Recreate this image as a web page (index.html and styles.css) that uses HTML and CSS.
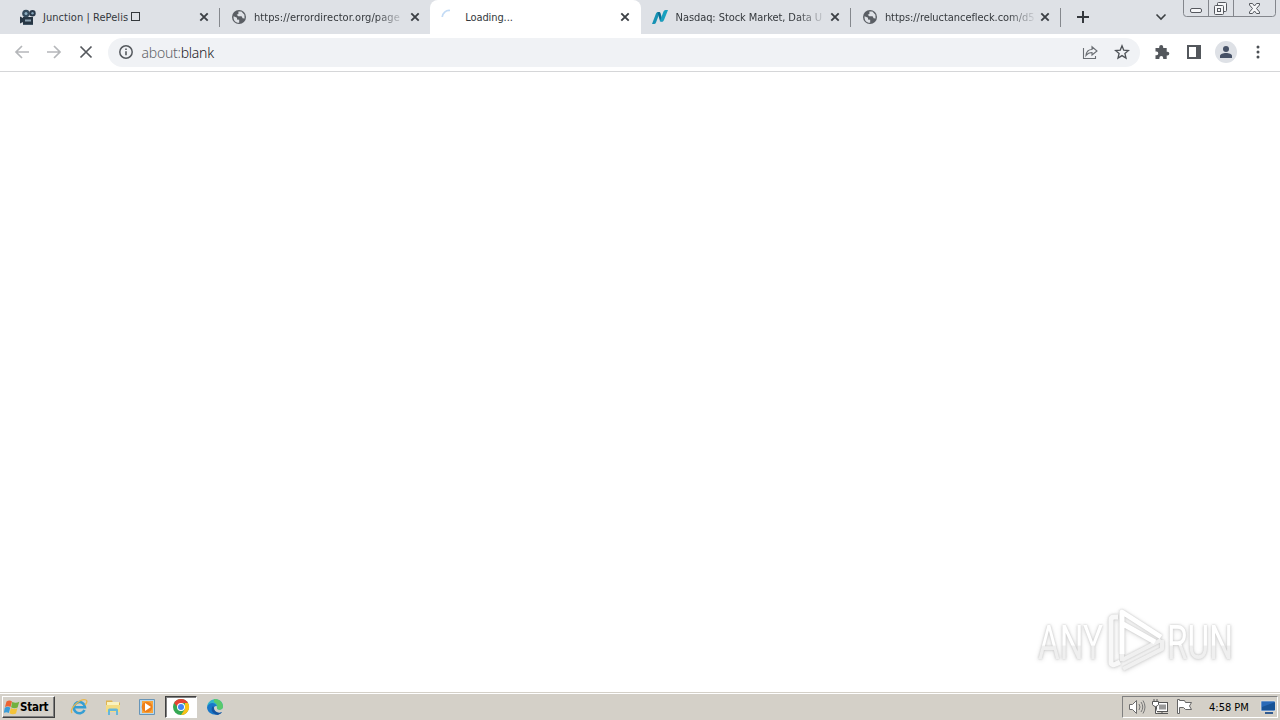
FILE: index.html
```html
<!DOCTYPE html>
<html lang="en">
<head>
<meta charset="utf-8">
<title>about:blank</title>
<link rel="stylesheet" href="styles.css">
</head>
<body>
<svg class="defs" width="0" height="0">
  <symbol id="close" viewBox="0 0 10 10"><path d="M1.3 1.3 8.7 8.7M8.7 1.3 1.3 8.7" stroke="#3c4045" stroke-width="1.9" fill="none"/></symbol>
  <symbol id="globe" viewBox="0 0 16 16"><circle cx="8" cy="8" r="7" fill="#5a5e64"/><path d="M2.6 7.3 6 8.8v1.6l2.2.4v3C4.5 14 2 11.200 2.600 7.300ZM7.400 2.400h3l3 3.300.2 3.800-2-.2-1-2H7.300L5.700 5.700l1.700-.8Z" fill="#dee1e6"/></symbol>
</svg>
<div class="screen">
  <header class="tabs">
    <div class="tab first">
      <svg class="fav" viewBox="0 0 16 16"><path d="M0 7.500 3 9v4l-3 1.500ZM3 8h10v7H3Z" fill="#263543"/><circle cx="6" cy="4.500" r="3.800" fill="#344a5c"/><circle cx="12.500" cy="4.300" r="3.200" fill="#29394a"/><circle cx="6" cy="4.500" r="1.500" fill="#8eafc2"/><circle cx="12.500" cy="4.300" r="1.200" fill="#83a3b8"/><path d="M5 10.500h6v2H5Z" fill="#8ba1b0"/><path d="M3 15h10v1H3Z" fill="#415464"/></svg>
      <span class="title t1">Junction | RePelis <i class="tofu"></i></span>
      <svg class="close"><use href="#close"/></svg>
    </div>
    <div class="tab second">
      <svg class="fav"><use href="#globe"/></svg>
      <span class="title fade t2">https://errordirector.org/page</span>
      <svg class="close"><use href="#close"/></svg>
    </div>
    <div class="tab active">
      <svg class="fav" viewBox="0 0 16 16"><path d="M1.200 8A7 7 0 0 1 9 1.500" fill="none" stroke="#c3dbf5" stroke-width="1.700"/></svg>
      <span class="title t3">Loading...</span>
      <svg class="close"><use href="#close"/></svg>
    </div>
    <div class="tab after">
      <svg class="fav" viewBox="0 0 16 16"><path d="M0 15 4 4.500q.5-1.500 2-1.500h2L4 13.500Q3.500 15 2 15Z" fill="#1692b4"/><path d="M5.500 3H7q1 0 1.500 1l2.300 8.500H9.300q-1 0-1.500-1Z" fill="#0c6e93"/><path d="M7.800 12.500 11.500 2.500Q12 1 13.500 1H16l-4 10q-.5 1.500-2 1.500Z" fill="#18a0bf"/></svg>
      <span class="title fade t4">Nasdaq: Stock Market, Data U</span>
      <svg class="close"><use href="#close"/></svg>
    </div>
    <div class="tab last">
      <svg class="fav"><use href="#globe"/></svg>
      <span class="title fade t5">https://reluctancefleck.com/d5</span>
      <svg class="close"><use href="#close"/></svg>
    </div>
    <svg class="plus" viewBox="0 0 14 14"><path d="M7 1v12M1 7h12" stroke="#34383d" stroke-width="2"/></svg>
    <svg class="chevron" viewBox="0 0 12 8"><path d="m1.500 1.500 4.500 4.500 4.500-4.500" fill="none" stroke="#3c4043" stroke-width="1.600"/></svg>
    <svg class="controls" viewBox="0 0 94 17"><path d="M.5 0v13.500q0 3 3 3h86q3 0 3-3V0M25.500 0v16M50.500 0v16" fill="none" stroke="#83868c"/><g fill="#f5f6f8" stroke="#55585e"><rect x="7.500" y="8.500" width="11" height="4" rx="1.500"/><rect x="34.500" y="2.500" width="9" height="9" rx="1"/><rect x="31.500" y="5.500" width="9" height="9" rx="1"/><rect x="34.500" y="8.500" width="3" height="3"/><path d="M66.500 3.500h3l2 2.500 2-2.500h3v1.500l-3 3.500 3 3.500v1.500h-3l-2-2.500-2 2.500h-3V12l3-3.500-3-3.500Z"/></g></svg>
  </header>
  <nav class="toolbar">
    <svg class="nav" viewBox="0 0 16 16"><path d="M15 8H2M8 2 2 8l6 6" fill="none" stroke="#b5b7ba" stroke-width="1.700"/></svg>
    <svg class="nav" viewBox="0 0 16 16"><path d="M1 8h13M8 2l6 6-6 6" fill="none" stroke="#b5b7ba" stroke-width="1.700"/></svg>
    <svg class="nav" viewBox="0 0 16 16"><path d="m2.500 2.500 11 11m0-11-11 11" fill="none" stroke="#55585d" stroke-width="1.700"/></svg>
    <div class="omnibox">
      <svg class="info" viewBox="0 0 16 16"><circle cx="8" cy="8" r="6.200" fill="none" stroke="#55595e" stroke-width="1.500"/><path d="M8 7.200v4M8 4.500v1.600" stroke="#55595e" stroke-width="1.600"/></svg>
      <span class="url">about:<b>blank</b></span>
      <svg class="share" viewBox="0 0 16 16"><path d="M1.500 4v10.500h12V12M4 11.500c.4-4 2.700-6 6-6V2.800L15 7l-5 4V8.500c-2.600 0-4.500 1-6 3Z" fill="none" stroke="#6a6e73" stroke-width="1.100"/></svg>
      <svg class="star" viewBox="0 0 16 16"><path d="m8 1.800 1.700 4.300 4.800.4-3.600 3 1.100 4.600L8 11.600l-4 2.500 1.100-4.600-3.600-3 4.800-.4Z" fill="none" stroke="#4d5156" stroke-width="1.300"/></svg>
    </div>
    <svg class="tool" viewBox="0 0 16 16"><path d="M1.500 4h3.700V3a2 2 0 0 1 4 0v1h3.500v3.700h.7a1.900 1.900 0 0 1 0 3.800h-.7V15H9.200v-1a1.900 1.900 0 0 0-3.800 0v1H1.500v-3.800h1a1.800 1.800 0 0 0 0-3.600h-1Z" fill="#53575c"/></svg>
    <svg class="tool" viewBox="0 0 16 16"><path d="M1 1h14v14H1Zm2 2v10h7V3Z" fill="#53575c" fill-rule="evenodd"/></svg>
    <svg class="avatar" viewBox="0 0 22 22"><circle cx="11" cy="11" r="11" fill="#dee1e6"/><circle cx="11" cy="8" r="3" fill="#475267"/><path d="M5 17v-2c0-4 12-4 12 0v2Z" fill="#475267"/></svg>
    <svg class="more" viewBox="0 0 4 16"><g fill="#4b4f54"><circle cx="2" cy="3" r="1.500"/><circle cx="2" cy="8" r="1.500"/><circle cx="2" cy="13" r="1.500"/></g></svg>
  </nav>
  <main class="page">
    <svg class="watermark" viewBox="0 0 210 76">
      <defs><linearGradient id="wm" x1="0" y1="0" x2="0" y2="1"><stop offset=".54" stop-color="#fff"/><stop offset=".57" stop-color="#efefef"/></linearGradient></defs>
      <g fill="url(#wm)" font-family="Roboto, sans-serif" font-size="49">
        <text x="8" y="55" textLength="65" lengthAdjust="spacingAndGlyphs">ANY</text>
        <text x="137" y="55" textLength="66" lengthAdjust="spacingAndGlyphs">RUN</text>
      </g>
      <g fill="none" stroke-width="5" stroke-linejoin="round">
        <path d="M88 13h-4q-3 0-3 3v42q0 4 5 2l4-2" stroke="#f8f8f8"/>
        <path d="M92 57V25M92 56l39-20M93 65l39-20V36" stroke="#f0f0f0" stroke-width="4"/>
        <path d="M92 50V8l39 25M93 20l32 18" stroke="#fff"/>
      </g>
    </svg>
  </main>
  <footer class="taskbar">
    <div class="start"><svg viewBox="0 0 16 16"><path d="M2.500 2.500q3-2 5.500 0L6.500 8Q4 6.300 1 8Z" fill="#ec6433"/><path d="M8.300 2.800q3 1.800 7 0L13.600 8.500q-3.500 1.500-6.500-.3Z" fill="#72b13e"/><path d="M.8 8.700q3-1.700 5.500 0L4.800 14q-2.500-1.700-5 0Z" fill="#399cd8"/><path d="M6.900 9q3 1.800 6.500.3L12 14.500q-3.500 1.500-6.500-.3Z" fill="#f4c338"/></svg><span>Start</span></div>
    <div class="launch">
      <div class="app"><svg viewBox="0 0 18 18"><path d="M14.500 12A5.600 5.600 0 1 1 15 9.300H5" fill="none" stroke="#359ed3" stroke-width="2.600"/><path d="M2 15C-1 11 10 0 16 2c2 1 0 4-1 5" fill="none" stroke="#e9b74d" stroke-width="1.300"/></svg></div>
      <div class="app"><svg viewBox="0 0 18 18"><path d="M2 2.500h6l1 2h7v9H2Z" fill="#dfb451"/><path d="M3 4h12v4H3Z" fill="#f9f2bf"/><path d="M2 7h14v7H2Z" fill="#f3dc84"/><path d="M4 17v-5q0-1.500 1.500-1.500h7Q14 10.500 14 12v5h-2v-4H6v4Z" fill="#65b7da"/></svg></div>
      <div class="app"><svg viewBox="0 0 18 18"><path d="M1.500 1.500h15v15h-15Z" fill="#b9d8ed" stroke="#6795b8"/><path d="M4 3h11v12H4Z" fill="#f7a43c"/><circle cx="9" cy="9" r="5.300" fill="#ee7f19"/><path d="m7 5 6 4-6 4Z" fill="#fff"/></svg></div>
      <div class="app pressed"><svg viewBox="0 0 18 18"><circle cx="9" cy="9" r="8" fill="#35a853"/><path d="M2.100 5A8 8 0 0 1 16 5H9v8Z" fill="#e54335"/><path d="M16 5a8 8 0 0 1-7 12l4-6V5Z" fill="#fbc116"/><circle cx="9" cy="9" r="4" fill="#fff"/><circle cx="9" cy="9" r="3" fill="#4285f4"/></svg></div>
      <div class="app"><svg viewBox="0 0 18 18"><path d="M1 9C2-1.500 17-1 17 8.500c0 4-6 4-6 1.500C11 5 4 4 1 9Z" fill="#32b5c9"/><path d="M8 1c6-.5 9 4 9 7.500 0 4-6 4-6 1.500 1-3-1-5-3-6Z" fill="#5ac96b"/><path d="M1 9c2-5 8-5 10-1-4-1-5 6 1 7 2 .3 3-.5 4-1C12 19 1 17 1 9Z" fill="#1977c8"/><path d="M7 8c-3 3-1 8 5 9 2-1 3-1.500 4-3-4 2-8-1-8-4Z" fill="#15549f"/></svg></div>
    </div>
    <div class="tray">
      <svg class="ti speaker" viewBox="0 0 18 16"><path d="M1.500 5.500h3l4-4v13l-4-4h-3Z" fill="#fff" stroke="#6c6c6c"/><path d="M11 5q2 3 0 6M13 3q3.500 5 0 10M15 1.500q4 6.500 0 13" fill="none" stroke="#777"/></svg>
      <svg class="ti network" viewBox="0 0 18 16"><rect x="4.500" y="3.500" width="11" height="9" fill="#fff" stroke="#555"/><path d="M7 5.500h7v5H7Z" fill="#999"/><path d="M5 14.500h11M10 13v2" stroke="#555"/><path d="M.5 2.500h6v3q-1 2-3 2t-3-2ZM2 0v2.500M5 0v2.500M3.500 8v6.500h2" fill="#fff" stroke="#555"/></svg>
      <svg class="ti flag" viewBox="0 0 18 16"><path d="M1.500.5v14h2V8.500h4l2 2h6l-2-3.500 2-3.500h-6l-1-2h-5v-1Z" fill="#fff" stroke="#666"/></svg>
      <span class="clock">4:58 PM</span>
      <svg class="desk" viewBox="0 0 16 16"><path d="M1 2h14v10H1Z" fill="#2869b8" stroke="#eee" stroke-width=".6"/><path d="M2 8 15 3v8H2Z" fill="#175296"/><path d="M5 14h8" stroke="#315b91" stroke-width="2"/></svg>
    </div>
  </footer>
</div>
</body>
</html>
```
FILE: styles.css
```css
* { box-sizing: border-box; }
body { margin: 0; background: #fff; font-family: "DejaVu Sans Condensed", "DejaVu Sans", sans-serif; }
svg { display: block; flex: none; }
.defs { position: absolute; }
.screen { width: 1280px; height: 720px; display: flex; flex-direction: column; overflow: hidden; }
.tabs { height: 34px; flex: none; background: #dee1e6; display: flex; align-items: flex-start; }
.tab { width: 210.3px; height: 34px; flex: none; display: flex; align-items: center; padding: 0 10px 0 11px; }
.tab.first { width: 220px; padding: 0 11px 0 20px; background: linear-gradient(#85888d, #85888d) right 0 top 8px / 1px 19px no-repeat; }
.tab.active { background: #fff; border-radius: 8px 8px 0 0; }
.tab.after, .tab.last { background: linear-gradient(#85888d, #85888d) right 0 top 8px / 1px 19px no-repeat; }
.fav { width: 16px; height: 16px; }
.title { width: 149px; margin-left: 7px; padding-top: 1px; font-size: 11px; line-height: 16px; color: #34383c; white-space: nowrap; }
.t1 { letter-spacing: .05px; }
.t2 { letter-spacing: .06px; }
.t3, .t4 { padding-left: 1px; }
.t3 { letter-spacing: -.1px; }
.t4 { letter-spacing: -.08px; }
.t5 { letter-spacing: -.06px; }
.fade { -webkit-mask-image: linear-gradient(90deg, #000 82%, transparent 102%); mask-image: linear-gradient(90deg, #000 82%, transparent 102%); }
.tofu { display: inline-block; width: 9px; height: 9px; border: 1px solid #34383c; }
.close { width: 10px; height: 10px; margin-left: auto; }
.tab:not(.first) .close { margin-right: 1px; }
.tab.second .close { margin-right: 0; }
.plus { width: 14px; height: 14px; margin: 10px 0 0 15px; }
.chevron { width: 12px; height: 8px; margin: 13px 0 0 auto; }
.controls { width: 94px; height: 17px; margin: 0 3px 0 16px; }
.toolbar { height: 38px; flex: none; background: #fff; border-bottom: 1px solid #d5d6d8; display: flex; align-items: center; padding: 0 20px 1px 14px; }
.nav { width: 16px; height: 16px; margin-right: 16px; }
.omnibox { width: 1032px; height: 29px; margin-left: -2px; border-radius: 15px; background: #f0f2f5; display: flex; align-items: center; padding: 0 10px; }
.info { width: 16px; height: 16px; }
.url { margin-left: 7.5px; padding-top: 1px; font-family: "Noto Sans", sans-serif; font-weight: 300; font-size: 14px; letter-spacing: -.25px; color: #5f6368; line-height: 20px; }
.url b { font-weight: 300; color: #202124; }
.share { width: 16px; height: 16px; margin-left: auto; }
.star { width: 16px; height: 16px; margin-left: 16px; }
.tool { width: 16px; height: 16px; margin-left: 14px; }
.tool + .tool { margin-left: 16px; }
.avatar { width: 22px; height: 22px; margin-left: 13px; }
.more { width: 4px; height: 16px; margin-left: auto; }
.page { position: relative; flex: 1; background: #fff; }
.watermark { position: absolute; right: 40px; bottom: 12px; width: 210px; height: 76px; filter: drop-shadow(0 0 1px #c4c4c4) drop-shadow(0 1px 2px #e2e2e2); }
.taskbar { height: 28px; flex: none; background: #d4d0c8; border-top: 1px solid #d4d0c8; box-shadow: inset 0 1px #fff; display: flex; align-items: flex-end; padding: 0 2px 2px 2px; }
.start { width: 53px; height: 22px; border: 1px solid; border-color: #fff #404040 #404040 #fff; box-shadow: inset -1px -1px #808080; display: flex; align-items: center; padding-left: 1px; font-weight: bold; font-size: 11.5px; letter-spacing: -.25px; color: #000; }
.start svg { width: 16px; height: 16px; margin-right: 0; }
.launch { display: flex; margin-left: 8px; }
.app { width: 32px; height: 22px; margin-right: 2px; display: flex; align-items: center; justify-content: center; }
.app svg { width: 18px; height: 18px; }
.pressed { background: #fff; border: 1px solid; border-color: #404040 #fff #fff #404040; box-shadow: inset 1px 1px #808080; }
.tray { width: 156px; height: 22px; margin-left: auto; border: 1px solid; border-color: #808080 #fff #fff #808080; display: flex; align-items: center; padding: 0 1px 0 5px; }
.ti { width: 18px; height: 16px; margin-right: 6px; }
.clock { width: 40px; margin-left: 9px; font-size: 11px; color: #000; white-space: nowrap; }
.desk { width: 16px; height: 16px; margin-left: auto; }
```
